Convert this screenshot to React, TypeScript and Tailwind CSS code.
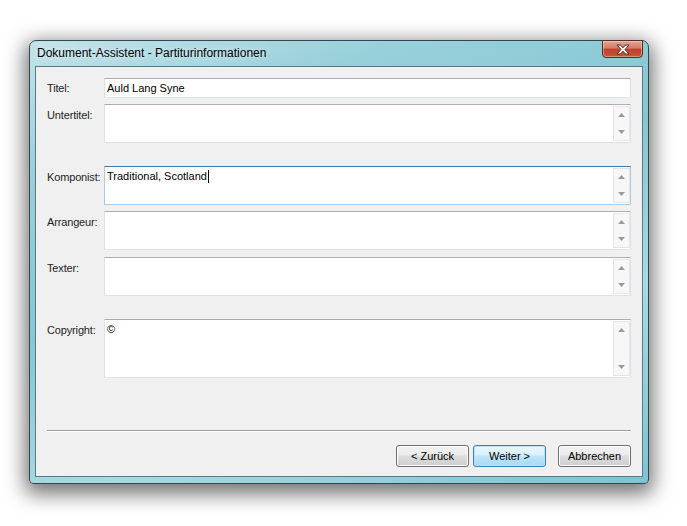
import React from 'react';

const font = { fontFamily: '"Liberation Sans", Arial, sans-serif' };

interface FieldProps {
  label: string;
  text?: string;
  multiline?: boolean;
  focused?: boolean;
  caret?: boolean;
  boxClass: string;
  rowClass: string;
  labelClass?: string;
}

function ScrollArrows() {
  return (
    <div className="absolute right-0 top-0 bottom-0 my-px flex w-[17px] flex-col justify-between border border-[#e6e6e6] bg-[#f7f7f7]">
      <div className="flex h-[16px] items-center justify-center">
        <svg width="7" height="4" viewBox="0 0 7 4">
          <path d="M3.5 0 L7 4 L0 4 Z" fill="#9a9a9a" />
        </svg>
      </div>
      <div className="flex h-[16px] items-center justify-center">
        <svg width="7" height="4" viewBox="0 0 7 4">
          <path d="M0 0 L7 0 L3.5 4 Z" fill="#9a9a9a" />
        </svg>
      </div>
    </div>
  );
}

function Field({ label, text, multiline, focused, caret, boxClass, rowClass, labelClass = 'pt-[5px]' }: FieldProps) {
  const border = focused
    ? 'border border-[#a9cce6] border-t-[#3d7bad]'
    : 'border border-[#dde2e8] border-t-[#abadb3]';
  return (
    <div className={`flex items-start ${rowClass}`}>
      <div className={`w-[57px] shrink-0 text-[11px] leading-[13px] tracking-[-0.15px] text-[#1e1e1e] ${labelClass}`}>{label}</div>
      <div className={`relative flex-1 bg-white ${border} ${boxClass}`}>
        <div className="px-[2px] pt-[3px] text-[11px] leading-[13px] text-black">
          {text}
          {caret && <span className="ml-px inline-block h-[13px] w-px bg-black align-top" />}
        </div>
        {multiline && <ScrollArrows />}
      </div>
    </div>
  );
}

function Button({ label, primary }: { label: string; primary?: boolean }) {
  const cls = primary
    ? 'border-[#3c7fb1] bg-[linear-gradient(to_bottom,#eaf6fd_0%,#d9f0fc_45%,#bee6fd_50%,#a7d9f5_100%)] shadow-[inset_0_0_0_1px_#b7e4f8]'
    : 'border-[#707070] bg-[linear-gradient(to_bottom,#f2f2f2_0%,#ebebeb_45%,#dddddd_50%,#cfcfcf_100%)] shadow-[inset_0_0_0_1px_#fcfcfc]';
  return (
    <button className={`flex h-[22px] w-[73px] shrink-0 items-center justify-center rounded-[3px] border text-[11px] text-black ${cls}`}>
      {label}
    </button>
  );
}

export default function App() {
  return (
    <div className="h-[526px] w-[687px] bg-white pl-[29px] pt-[40px]" style={font}>
      <div className="flex h-[444px] w-[620px] flex-col rounded-t-[7px] rounded-b-[4px] border border-[#35474e] bg-[linear-gradient(160deg,#c4e3ea_0%,#98d0da_20%,#86c6d3_45%,#a8dbe2_70%,#7cc4d3_100%)] px-[5px] pb-[6px] shadow-[0_6px_20px_4px_rgba(0,0,0,0.55)]">
        <div className="flex h-[25px] items-start justify-between">
          <div className="pl-[2px] pt-[5px] text-[12px] leading-[15px] text-black [text-shadow:0_0_6px_rgba(255,255,255,0.9)]">
            Dokument-Assistent - Partiturinformationen
          </div>
          <div className="-mt-px flex h-[18px] w-[41px] items-center justify-center rounded-b-[4px] border border-[#5b2a21] bg-[linear-gradient(to_bottom,#e3a596_0%,#d47a65_45%,#c0402a_50%,#c8563c_100%)] shadow-[inset_0_0_0_1px_rgba(255,255,255,0.35)]">
            <svg width="14" height="11" viewBox="0 0 14 11">
              <path
                d="M1 1 H4.5 L7 3.8 L9.5 1 H13 L9 5.5 L13 10 H9.5 L7 7.2 L4.5 10 H1 L5 5.5 Z"
                fill="#ffffff"
                stroke="#4a2a25"
                strokeWidth="1"
                strokeLinejoin="round"
              />
            </svg>
          </div>
        </div>
        <div className="flex flex-1 flex-col border border-[#5d7882] bg-[#f0f0f0] px-[11px] pt-[11px]">
          <Field label="Titel:" text="Auld Lang Syne" boxClass="h-[20px]" rowClass="" labelClass="pt-[4px]" />
          <Field label="Untertitel:" multiline boxClass="h-[39px]" rowClass="mt-[6px]" />
          <Field label="Komponist:" text="Traditional, Scotland" caret focused multiline boxClass="h-[39px]" rowClass="mt-[23px]" />
          <Field label="Arrangeur:" multiline boxClass="h-[39px]" rowClass="mt-[6px]" />
          <Field label="Texter:" multiline boxClass="h-[39px]" rowClass="mt-[7px]" />
          <Field label="Copyright:" text="©" multiline boxClass="h-[59px]" rowClass="mt-[23px]" />
          <div className="mt-[52px] h-[2px] border-t border-[#a0a0a0] border-b border-b-white" />
          <div className="mt-[13px] flex justify-end">
            <Button label="< Zurück" />
            <div className="ml-[4px]">
              <Button label="Weiter >" primary />
            </div>
            <div className="ml-[12px]">
              <Button label="Abbrechen" />
            </div>
          </div>
        </div>
      </div>
    </div>
  );
}
